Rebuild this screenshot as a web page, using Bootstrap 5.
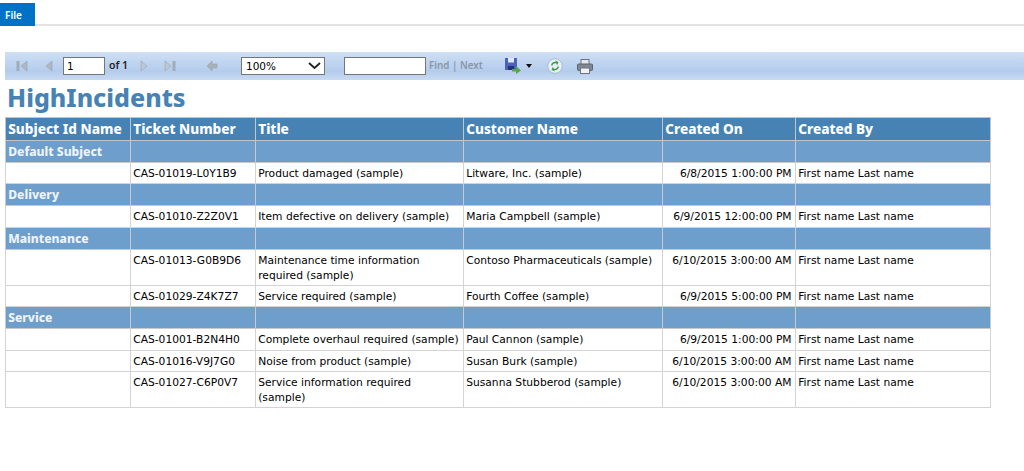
<!DOCTYPE html>
<html lang="en">
<head>
<meta charset="utf-8">
<title>HighIncidents</title>
<link href="https://cdn.jsdelivr.net/npm/bootstrap@5.3.0/dist/css/bootstrap.min.css" rel="stylesheet">
<style>
html,body{height:471px;overflow:hidden;background:#fff}
body{font-family:"DejaVu Sans","Liberation Sans",sans-serif;font-size:11px;color:#000}
.ribbon{height:26px;border-bottom:2px solid #e4e4e4;margin-bottom:26px;padding-top:3px}
.file-tab{width:35px;height:23px;background:#0072c6;color:#fff;font-size:10px;font-weight:600;font-family:"Noto Sans",sans-serif;padding-left:5px;line-height:24px}
.rpt-bar{margin-left:5px;height:28px;background:linear-gradient(#cfe0f5 0,#bcd2ef 45%,#b4ccec 70%,#c9dbf3 100%);padding-left:11px}
.rpt-bar svg{display:block;flex:none}
.pg-input{width:42px;height:18px;border:1px solid #767676;background:#fff;font-size:10.5px;line-height:16px;padding-left:3px;margin-left:10px}
.of-txt{font-size:10.5px;font-weight:600;font-family:"Noto Sans",sans-serif;margin-left:4px;width:31px;color:#222}
.zoom-sel{width:84px;height:18px;border:1px solid #767676;background:#fff;font-size:10.5px;line-height:16px;padding-left:4px;margin-left:23px;padding-right:3px}
.find-input{width:82px;height:18px;border:1px solid #767676;background:#fff;margin-left:19px}
.find-txt{font-size:9.800px;color:#8a97a8;font-weight:600;margin-left:3px;width:76px;font-family:"Noto Sans",sans-serif}
.ic-prev{margin-left:17px}
.ic-next{margin-left:0}
.ic-last{margin-left:16px}
.ic-back{margin-left:30px}
.ic-caret{margin-left:5px}
.ic-refresh{margin-left:15px}
.ic-print{margin-left:14px}
.rpt-title{color:#4682b4;font-family:"Noto Sans",sans-serif;font-weight:800;font-size:25px;line-height:35px;height:37px;margin:0 0 0 7px}
.rpt-table{table-layout:fixed;width:985px;margin-left:4.600px;border-collapse:collapse;font-size:10.7px}
.rpt-table td,.rpt-table th{border:1px solid #d3d3d3;padding:2px 3px 0 2.600px;vertical-align:top;line-height:14px;overflow:hidden}
.rpt-table th{background:#4682b4;color:#fff;font-family:"Noto Sans",sans-serif;font-size:13.600px;font-weight:800;height:23px;padding-top:1px;line-height:19px;border-color:#c4c4c4;white-space:nowrap}
.rpt-table .grp td{background:#6e9ecb;color:#eef3f9;font-family:"Noto Sans",sans-serif;font-size:12.100px;font-weight:800;height:22px;line-height:17px;border-color:#c9c9c9;white-space:nowrap}
.rpt-table .one td{height:22px;padding-top:4px;white-space:nowrap}
.rpt-table .low td{height:21px}
.rpt-table .two td{height:36px;padding-top:3px;line-height:15px}
.rpt-table td.num{text-align:right}
.c1{width:125px}.c2{width:125px}.c3{width:208px}.c4{width:199px}.c5{width:133px}.c6{width:195px}
</style>
</head>
<body>
<div class="ribbon"><div class="file-tab">File</div></div>
<div class="rpt-bar d-flex align-items-center">
  <svg width="12" height="12" viewBox="0 0 12 12"><rect x="0.500" y="1" width="3" height="10" fill="#a2acb8"/><path d="M11 1 5 6l6 5z" fill="#aeb8c4" stroke="#98a2ae" stroke-width=".6"/></svg>
  <svg class="ic-prev" width="8" height="12" viewBox="0 0 8 12"><path d="M7 1 1 6l6 5z" fill="#aeb8c4" stroke="#98a2ae" stroke-width=".6"/></svg>
  <div class="pg-input">1</div>
  <div class="of-txt">of 1</div>
  <svg class="ic-next" width="8" height="12" viewBox="0 0 8 12"><path d="M1 1l6 5-6 5z" fill="#bcc8d6" stroke="#98a2ae" stroke-width=".6"/></svg>
  <svg class="ic-last" width="12" height="12" viewBox="0 0 12 12"><path d="M1 1l6 5-6 5z" fill="#bcc8d6" stroke="#98a2ae" stroke-width=".6"/><rect x="8.500" y="1" width="3" height="10" fill="#a2acb8"/></svg>
  <svg class="ic-back" width="12" height="12" viewBox="0 0 12 12"><path d="M1 6l5-5v3h5v4H6v3z" fill="#a8b0ba" stroke="#98a2ae" stroke-width=".6"/></svg>
  <div class="zoom-sel d-flex justify-content-between align-items-center"><span>100%</span><svg width="13" height="8" viewBox="0 0 13 8"><path d="M1 1l5.500 5L12 1" fill="none" stroke="#222" stroke-width="1.800"/></svg></div>
  <div class="find-input"></div>
  <div class="find-txt">Find | Next</div>
  <svg width="16" height="16" viewBox="0 0 16 16"><rect x="0" y="0" width="12" height="12" fill="#4a63b8"/><rect x="3" y="0" width="6" height="4.500" fill="#dfe6f5"/><rect x="3" y="8" width="6" height="4" fill="#2a2f7a"/><path d="M7 11h4V8l5 4.500L11 16v-2.500H7z" fill="#55a850"/></svg>
  <svg class="ic-caret" width="6" height="4" viewBox="0 0 6 4"><path d="M0 0h6L3 4z" fill="#111"/></svg>
  <svg class="ic-refresh" width="16" height="16" viewBox="0 0 16 16"><circle cx="8" cy="8" r="7.300" fill="#e8eff7" stroke="#a9bccf"/><path d="M4 7.500a4 4 0 0 1 5-3.500L8 2.500l3.500 1.500L10 7.500 9.500 5.500A2.700 2.700 0 0 0 5.500 7.500z" fill="#3f9a44"/><path d="M12 8.500a4 4 0 0 1-5 3.500l1 1.500L4.500 12 6 8.500l.5 2a2.700 2.700 0 0 0 4-2z" fill="#3f9a44"/></svg>
  <svg class="ic-print" width="16" height="15" viewBox="0 0 16 15"><rect x="4" y="0.500" width="8" height="5" fill="#e4e8ee" stroke="#6d7480"/><rect x="0.500" y="5" width="15" height="6.500" rx="1" fill="#7f8790" stroke="#5c636d"/><rect x="3.500" y="9" width="9" height="5.500" fill="#eef1f5" stroke="#6d7480"/></svg>
</div>
<h1 class="rpt-title">HighIncidents</h1>
<table class="rpt-table">
  <colgroup><col class="c1"><col class="c2"><col class="c3"><col class="c4"><col class="c5"><col class="c6"></colgroup>
  <thead><tr><th>Subject Id Name</th><th>Ticket Number</th><th>Title</th><th>Customer Name</th><th>Created On</th><th>Created By</th></tr></thead>
  <tbody>
    <tr class="grp"><td>Default Subject</td><td></td><td></td><td></td><td></td><td></td></tr>
    <tr class="one low"><td></td><td>CAS-01019-L0Y1B9</td><td>Product damaged (sample)</td><td>Litware, Inc. (sample)</td><td class="num">6/8/2015 1:00:00 PM</td><td>First name Last name</td></tr>
    <tr class="grp"><td>Delivery</td><td></td><td></td><td></td><td></td><td></td></tr>
    <tr class="one"><td></td><td>CAS-01010-Z2Z0V1</td><td>Item defective on delivery (sample)</td><td>Maria Campbell (sample)</td><td class="num">6/9/2015 12:00:00 PM</td><td>First name Last name</td></tr>
    <tr class="grp"><td>Maintenance</td><td></td><td></td><td></td><td></td><td></td></tr>
    <tr class="two"><td></td><td>CAS-01013-G0B9D6</td><td>Maintenance time information required (sample)</td><td>Contoso Pharmaceuticals (sample)</td><td class="num">6/10/2015 3:00:00 AM</td><td>First name Last name</td></tr>
    <tr class="one low"><td></td><td>CAS-01029-Z4K7Z7</td><td>Service required (sample)</td><td>Fourth Coffee (sample)</td><td class="num">6/9/2015 5:00:00 PM</td><td>First name Last name</td></tr>
    <tr class="grp"><td>Service</td><td></td><td></td><td></td><td></td><td></td></tr>
    <tr class="one"><td></td><td>CAS-01001-B2N4H0</td><td>Complete overhaul required (sample)</td><td>Paul Cannon (sample)</td><td class="num">6/9/2015 1:00:00 PM</td><td>First name Last name</td></tr>
    <tr class="one low"><td></td><td>CAS-01016-V9J7G0</td><td>Noise from product (sample)</td><td>Susan Burk (sample)</td><td class="num">6/10/2015 3:00:00 AM</td><td>First name Last name</td></tr>
    <tr class="two"><td></td><td>CAS-01027-C6P0V7</td><td>Service information required (sample)</td><td>Susanna Stubberod (sample)</td><td class="num">6/10/2015 3:00:00 AM</td><td>First name Last name</td></tr>
  </tbody>
</table>
</body>
</html>
